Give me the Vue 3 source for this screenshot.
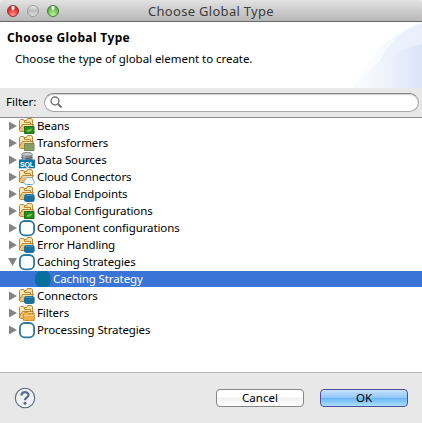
<script setup>
const rows = [
  { label: 'Beans', icon: 'folder', badge: 'green' },
  { label: 'Transformers', icon: 'folder', badge: 'olive' },
  { label: 'Data Sources', icon: 'sql' },
  { label: 'Cloud Connectors', icon: 'folder', badge: 'cloud' },
  { label: 'Global Endpoints', icon: 'folder', badge: 'blue' },
  { label: 'Global Configurations', icon: 'folder', badge: 'green' },
  { label: 'Component configurations', icon: 'ring' },
  { label: 'Error Handling', icon: 'folder', badge: 'blue' },
  { label: 'Caching Strategies', icon: 'ring', open: true },
  { label: 'Caching Strategy', icon: 'solid', child: true },
  { label: 'Connectors', icon: 'folder', badge: 'blue' },
  { label: 'Filters', icon: 'folder', badge: 'orange' },
  { label: 'Processing Strategies', icon: 'ring' },
]
</script>

<template>
  <div class="dialog">
    <header class="titlebar">
      <div class="lights"><i class="red"></i><i class="grey"></i><i class="green"></i></div>
      <span class="title">Choose Global Type</span>
    </header>
    <section class="banner">
      <svg class="swoosh" width="72" height="66" viewBox="0 0 72 66">
        <defs>
          <linearGradient id="fadeA"><stop offset="0" stop-color="#fff" /><stop offset=".45" stop-color="#f8fafe" /><stop offset="1" stop-color="#edf2fc" /></linearGradient>
          <linearGradient id="fadeB"><stop offset="0" stop-color="#fcfdff" /><stop offset=".5" stop-color="#eef3fc" /><stop offset="1" stop-color="#dbe4f7" /></linearGradient>
        </defs>
        <path d="M2 66C14 37 40 11 72 1V66Z" fill="url(#fadeA)" />
        <path d="M25 51C34 25 50 8 72 1V24L30 55Z" fill="#e6eefb" opacity=".6" />
        <path d="M2 66C20 43 46 27 72 22V66Z" fill="url(#fadeB)" />
      </svg>
      <h1>Choose Global Type</h1>
      <p>Choose the type of global element to create.</p>
    </section>
    <section class="filter">
      <label>Filter:</label>
      <div class="search">
        <svg width="13" height="13" viewBox="0 0 13 13" fill="none" stroke="#777">
          <circle cx="5" cy="5" r="3.9" stroke-width="1.5" /><path d="M8 8L11.5 11.5" stroke-width="2.2" />
        </svg>
      </div>
    </section>
    <main class="tree">
      <div v-for="r in rows" :key="r.label" class="row" :class="{ child: r.child }">
        <span class="arrow">
          <svg v-if="!r.child" width="9" height="10" viewBox="0 0 9 10" fill="#858585">
            <path v-if="r.open" d="M0 1H9L4.5 9Z" /><path v-else d="M1 .5L9 5L1 9.5Z" />
          </svg>
        </span>
        <svg class="icon" width="17" height="17" viewBox="0 0 17 17">
          <g v-if="r.icon === 'folder'" stroke-linejoin="round">
            <path d="M5.5 9V2.5H8.5L9.5 .5H13.5L14.5 2V9Z" fill="#fbe0a4" stroke="#bd8433" />
            <path d="M1.5 12V2.5L2.5 1.5H5.5L6.5 3V4.5H12.5V8L10 12Z" fill="#fde8b4" stroke="#bd8433" />
            <path d="M1 12L4.5 6.5H15.5L12 13.5H2.5Z" fill="#efc170" stroke="#bd8433" />
            <path d="M5 7.5H14" stroke="#ffe3a6" />
            <g v-if="r.badge === 'green'"><path d="M6.5 8.5H16V15.5H6.5Z" fill="#288b20" stroke="#197016" /><path d="M8.5 13.2C9.2 10.6 12 12 14.5 10.2C14 13 11 14.8 8.5 13.2Z" fill="#7cc748" /></g>
            <path v-if="r.badge === 'olive'" d="M6.5 8.5H16V15.5H6.5Z" fill="#899d61" stroke="#718951" />
            <path v-if="r.badge === 'cloud'" d="M8.5 15.5C5.5 15.5 5 12 7.3 11C7 8.5 10 7.8 11.2 9C13 7.8 15.3 9 15 11C17.2 12.3 16.5 15.5 14 15.5Z" fill="#fff" stroke="#63a9cc" />
            <g v-if="r.badge === 'blue'"><rect x="6" y="8" width="10.7" height="8" rx="2.7" fill="#1b719e" /><path d="M8 9.3H14.7" stroke="#4d9abb" /></g>
            <g v-if="r.badge === 'orange'"><path d="M5.5 15.5V8.5L6.5 7.5H9.5L10.5 8.5H16.3V15.5Z" fill="#f2b04a" stroke="#d6912f" /><path d="M6 10.5H16" stroke="#ffd384" /></g>
          </g>
          <g v-else-if="r.icon === 'sql'">
            <path d="M3.5 2.5V9H14.5V2.5" fill="#858b91" /><path d="M5 4V9H7.5V4" fill="#d4d7d9" />
            <ellipse cx="9" cy="2.3" rx="5.5" ry="1.9" fill="#c7cacd" stroke="#6c7278" stroke-width=".8" />
            <path d="M3.5 5.5Q9 7.5 14.5 5.5" fill="none" stroke="#555d64" />
            <rect x="1" y="7.5" width="16" height="8.8" fill="#0b75a8" />
            <text x="9" y="14.7" text-anchor="middle" class="sql">SQL</text>
          </g>
          <rect v-else-if="r.icon === 'ring'" x="1.9" y="1" width="14.2" height="14.4" rx="4.9" fill="#fff" stroke="#2a789d" stroke-width="1.8" />
          <path v-else d="M5 0H13L14.5 1.5C15 3 16.5 3.5 16.5 5V11C16.5 13 15 13.5 14.5 15L13 16H5L3.5 15C3 13.5 1 13 1 11V5C1 3.5 3 3 3.5 1.5Z" fill="#08709c" />
        </svg>
        <span class="label">{{ r.label }}</span>
      </div>
    </main>
    <footer class="footer">
      <svg width="22" height="22" viewBox="0 0 22 22">
        <circle cx="11" cy="11" r="9.7" fill="#f1f1f1" stroke="#536888" stroke-width="1.1" />
        <path d="M7.5 8.5C7.5 4 14.5 4.2 14.5 8C14.5 10.5 11 10.2 11 13.2" fill="none" stroke="#566d96" stroke-width="2.3" />
        <circle cx="11" cy="16.2" r="1.5" fill="#566d96" />
      </svg>
      <button class="cancel">Cancel</button>
      <button class="ok">OK</button>
    </footer>
  </div>
</template>

<style>
body { margin: 0; overflow: hidden; }
</style>
<style scoped>
.dialog { width: 422px; height: 423px; box-sizing: border-box; display: flex; flex-direction: column; background: #e8e8e8; font: 11.5px "Noto Sans", "Open Sans", sans-serif; color: #000; }
.titlebar { height: 22px; box-sizing: border-box; border-bottom: 1px solid #686868; border-radius: 4px 4px 0 0; background: linear-gradient(#e2e2e2, #b7b7b7); display: grid; grid-template-columns: 69px 1fr 69px; align-items: center; flex: none; }
.lights { display: flex; gap: 8px; padding-left: 7px; }
.lights i { width: 12px; height: 12px; box-sizing: border-box; border-radius: 50%; border: 1px solid #777; }
.lights .red { border-color: #963234; background: radial-gradient(ellipse at 50% 15%, #fff 0 10%, transparent 32%), radial-gradient(circle at 50% 90%, #ff9a92, #e22e30 60%, #b91d23); }
.lights .grey { border-color: #9a9a9a; background: linear-gradient(#ededed, #bcbcbc 45%, #dedede); }
.lights .green { border-color: #437b39; background: radial-gradient(ellipse at 50% 15%, #fff 0 10%, transparent 32%), radial-gradient(circle at 50% 90%, #c4f7a5, #68be50 60%, #408b34); }
.title { text-align: center; font-size: 13px; color: #3c3c3c; letter-spacing: .3px; line-height: 20px; white-space: nowrap; }
.banner { position: relative; height: 66px; box-sizing: border-box; background: #fff; padding: 7px 0 0 7px; flex: none; }
.swoosh { position: absolute; right: 0; top: 0; }
h1 { position: relative; margin: 0; font-size: 12px; line-height: 17px; font-weight: 700; letter-spacing: .38px; }
p { position: relative; margin: 4px 0 0 8px; line-height: 17px; letter-spacing: -.04px; }
.filter { height: 30px; box-sizing: border-box; display: flex; align-items: center; padding: 0 3px 0 6px; border-bottom: 1px solid #8d8d8d; flex: none; }
.filter label { width: 38px; line-height: 16px; padding-bottom: 2px; }
.search { flex: 1; height: 19px; box-sizing: border-box; border: 1px solid #a7a7a7; border-top-color: #858585; border-radius: 10px; background: #fff; box-shadow: inset 0 1px 1px #ccc; display: flex; align-items: center; padding-left: 5px; }
.tree { flex: 1; background: #fff; min-height: 0; }
.row { height: 17px; display: flex; align-items: center; padding-left: 8px; line-height: 15px; white-space: nowrap; letter-spacing: -.11px; }
.row.child { background: linear-gradient(#3a74d7 16px, #fff 16px); color: #fff; padding-left: 24px; }
.label { padding-bottom: 2px; }
.arrow { width: 10px; height: 12px; flex: none; display: flex; }
.icon { flex: none; margin-right: 2px; }
.sql { font: 700 7px "Liberation Sans", sans-serif; fill: #fff; }
.footer { height: 51px; box-sizing: border-box; border-top: 1px solid #b4b4b4; background: #e8e8e8; display: flex; align-items: center; padding: 0 14px; flex: none; }
button { width: 88px; height: 18px; box-sizing: border-box; padding: 0 0 1px; border: 1px solid #858585; border-radius: 4px; font: inherit; line-height: 15px; color: #000; }
.cancel { margin-left: auto; margin-right: 16px; background: linear-gradient(#fff 45%, #f0f0f0 50%, #fff); }
.ok { border-color: #4d4d9c; background: linear-gradient(#c8e2fa, #8fc6f7 48%, #6db5f7 52%, #a9e0ff); }
</style>
